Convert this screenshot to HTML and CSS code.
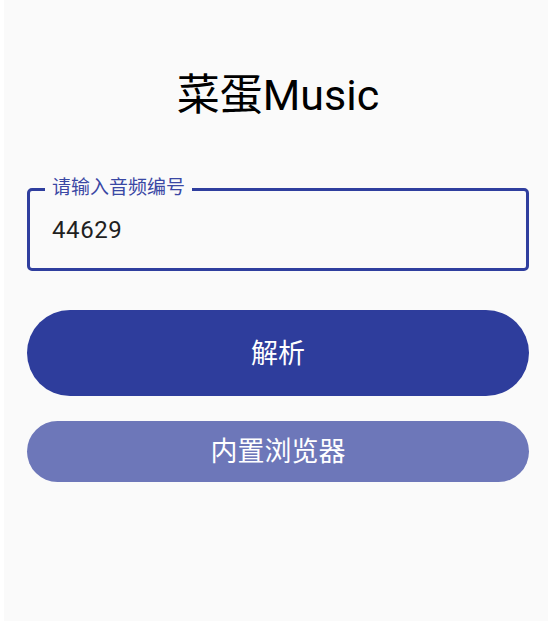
FILE: index.html
```html
<!DOCTYPE html>
<html lang="zh-CN">
<head>
  <meta charset="UTF-8">
  <meta name="viewport" content="width=device-width, initial-scale=1.0">
  <title>菜蛋Music</title>
  <link rel="stylesheet" href="styles.css">
</head>
<body>
  <div class="screen">
    <h1 class="title">菜蛋Music</h1>

    <div class="field">
      <label class="field-label" for="audio-id">请输入音频编号</label>
      <input class="field-input" type="text" id="audio-id" value="44629">
    </div>

    <button class="btn btn-primary">解析</button>
    <button class="btn btn-secondary">内置浏览器</button>
  </div>
</body>
</html>
```

FILE: styles.css
```css
html,
body {
  margin: 0;
  height: 100%;
  background: #ffffff;
}

body {
  font-family: Roboto, "Noto Sans CJK SC", sans-serif;
}

.screen {
  box-sizing: border-box;
  height: 100%;
  margin-left: 4px;
  padding: 70px 19px 0 23px;
  background: #fafafa;
  display: flex;
  flex-direction: column;
}

.title {
  margin: 0;
  font-size: 43px;
  font-weight: 400;
  line-height: 50px;
  color: #000000;
  text-align: center;
}

.field {
  position: relative;
  box-sizing: border-box;
  height: 83px;
  margin-top: 68px;
  border: 3px solid #2f3e9e;
  border-radius: 5px;
  display: flex;
  align-items: center;
  padding-left: 22px;
}

.field-label {
  position: absolute;
  top: -13px;
  left: 15px;
  padding: 0 7px;
  background: #fafafa;
  font-size: 19px;
  line-height: 20px;
  color: #3a48a4;
}

.field-input {
  border: none;
  outline: none;
  background: transparent;
  padding: 0;
  width: 100%;
  font-family: inherit;
  font-size: 24px;
  letter-spacing: 0.6px;
  color: #1f1f1f;
}

.btn {
  border: none;
  border-radius: 999px;
  padding: 0 0 4px;
  color: #ffffff;
  font-family: inherit;
  font-size: 27px;
  cursor: pointer;
}

.btn-primary {
  height: 86px;
  margin-top: 39px;
  background: #2e3d9c;
}

.btn-secondary {
  height: 61px;
  margin-top: 25px;
  background: #6d77b9;
}
```
